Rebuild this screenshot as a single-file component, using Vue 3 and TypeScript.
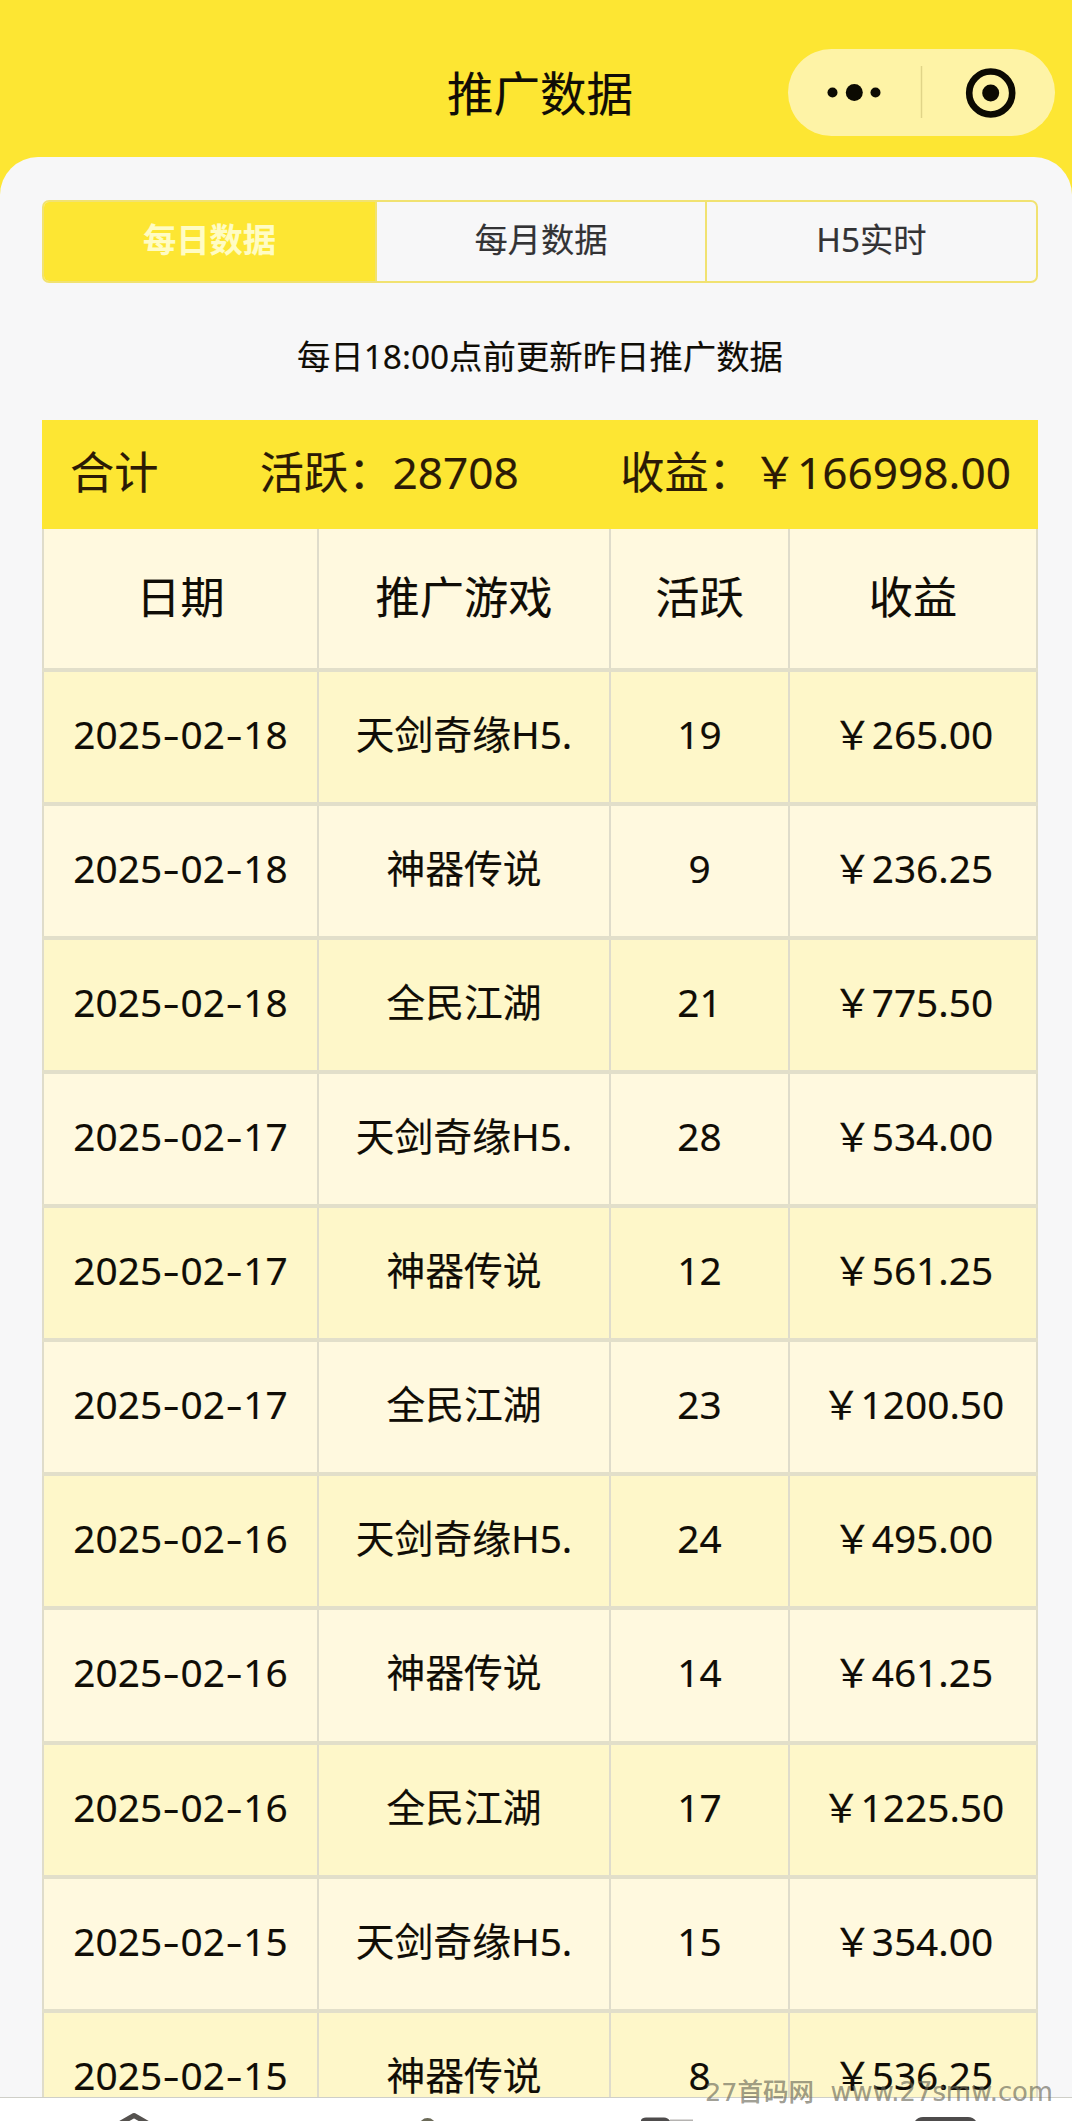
<script setup lang="ts">
interface Row {
  date: string
  game: string
  active: number
  income: string
}

const tabs: string[] = ['每日数据', '每月数据', 'H5实时']
const activeTab = 0
const columns: string[] = ['日期', '推广游戏', '活跃', '收益']

const rows: Row[] = [
  { date: '2025-02-18', game: '天剑奇缘H5.', active: 19, income: '265.00' },
  { date: '2025-02-18', game: '神器传说', active: 9, income: '236.25' },
  { date: '2025-02-18', game: '全民江湖', active: 21, income: '775.50' },
  { date: '2025-02-17', game: '天剑奇缘H5.', active: 28, income: '534.00' },
  { date: '2025-02-17', game: '神器传说', active: 12, income: '561.25' },
  { date: '2025-02-17', game: '全民江湖', active: 23, income: '1200.50' },
  { date: '2025-02-16', game: '天剑奇缘H5.', active: 24, income: '495.00' },
  { date: '2025-02-16', game: '神器传说', active: 14, income: '461.25' },
  { date: '2025-02-16', game: '全民江湖', active: 17, income: '1225.50' },
  { date: '2025-02-15', game: '天剑奇缘H5.', active: 15, income: '354.00' },
  { date: '2025-02-15', game: '神器传说', active: 8, income: '536.25' },
]

const dateParts = (date: string): string[] => date.split(/(-)/)
</script>

<template>
  <div class="page">
    <header class="nav">
      <h1 class="title">推广数据</h1>
      <div class="capsule">
        <svg width="267" height="87" viewBox="0 0 267 87">
          <g fill="#0c0a02">
            <circle cx="44.500" cy="43.500" r="5" />
            <circle cx="66.300" cy="43.500" r="8.500" />
            <circle cx="87.500" cy="43.500" r="5" />
            <circle cx="202.700" cy="44" r="8.500" />
          </g>
          <path d="M133.500 17V69" stroke="#e0d488" stroke-width="1.500" />
          <circle cx="202.700" cy="44" r="21.500" fill="none" stroke="#0c0a02" stroke-width="6.600" />
        </svg>
      </div>
    </header>

    <main class="sheet">
      <nav class="tabs">
        <div v-for="(tab, i) in tabs" :key="tab" class="tab" :class="{ on: i === activeTab }">{{ tab }}</div>
      </nav>
      <p class="notice">每日18:00点前更新昨日推广数据</p>

      <section class="table">
        <div class="total">
          <span>合计</span>
          <span>活跃：28708</span>
          <span>收益：￥166998.00</span>
        </div>
        <div class="row head">
          <div v-for="c in columns" :key="c" class="cell">{{ c }}</div>
        </div>
        <div v-for="(r, i) in rows" :key="i" class="row" :class="{ deep: i % 2 === 0 }">
          <div class="cell">
            <span v-for="(p, k) in dateParts(r.date)" :key="k" :class="{ dash: p === '-' }">{{ p }}</span>
          </div>
          <div class="cell">{{ r.game }}</div>
          <div class="cell">{{ r.active }}</div>
          <div class="cell">￥{{ r.income }}</div>
        </div>
      </section>
    </main>

    <footer class="tabbar">
      <svg width="1072" height="23" viewBox="0 0 1072 23">
        <path d="M112 30L134 17.500L156 30" fill="none" stroke="#55524f" stroke-width="5" stroke-linejoin="round" />
        <circle cx="427.500" cy="28.500" r="8.500" fill="#6b6a58" />
        <path d="M641 23V22Q642 19.500 646 19.500H664Q668 19.500 670 23Z" fill="#4e4c4c" />
        <path d="M670 21.500H693V23H670Z" fill="#b5b3b1" />
        <path d="M915 23Q918 19 923 19H968Q973 19 976 23Z" fill="#4e4c4c" />
      </svg>
    </footer>
    <div class="watermark"><span class="site">27首码网</span><span class="url">www.27smw.com</span></div>
  </div>
</template>

<style>
body {
  margin: 0;
  overflow: hidden;
}
</style>

<style scoped>
.page {
  position: relative;
  display: flex;
  flex-direction: column;
  width: 1072px;
  height: 2121px;
  overflow: hidden;
  background: #fde633;
  color: #100d06;
  font-family: "Noto Sans", "Noto Sans CJK SC", sans-serif;
  -webkit-text-stroke: 0.15px currentColor;
}
.nav {
  position: relative;
  flex: none;
  display: flex;
  justify-content: center;
  height: 157px;
}
.title {
  margin: 59px 0 0 8px;
  font-size: 46.500px;
  font-weight: 400;
  line-height: 68px;
  height: 68px;
}
.capsule {
  position: absolute;
  left: 788px;
  top: 49px;
  width: 267px;
  height: 87px;
  border-radius: 44px;
  background: #fef3a6;
}
.sheet {
  flex: 1;
  min-height: 0;
  overflow: hidden;
  padding: 43px 34px 0 42px;
  border-radius: 38px 38px 0 0;
  background: #f7f7f8;
}
.tabs {
  display: grid;
  grid-template-columns: 331px 330px 1fr;
  box-sizing: border-box;
  height: 83px;
  border: 2px solid #f1e271;
  border-radius: 7px;
  overflow: hidden;
}
.tab {
  box-sizing: border-box;
  text-align: center;
  font-size: 33.300px;
  line-height: 74px;
  color: #333335;
}
.tab + .tab {
  border-left: 2px solid #f1e271;
}
.tab.on {
  background: #fde633;
  color: #fffcc4;
  font-weight: 700;
}
.notice {
  margin: 48px 0 0;
  height: 50px;
  line-height: 50px;
  text-align: center;
  font-size: 33.400px;
}
.table {
  margin-top: 39px;
}
.total {
  display: flex;
  justify-content: space-between;
  box-sizing: border-box;
  height: 109px;
  padding: 0 27px 0 28px;
  background: #fde633;
  color: #2b1a05;
  font-size: 44.200px;
  line-height: 104px;
}
.row {
  display: grid;
  grid-template-columns: 275px 292px 179px 250px;
  box-sizing: border-box;
  height: 134.150px;
  border-bottom: 4px solid #e2dfca;
  background: #fff9df;
  font-size: 38.800px;
  line-height: 124px;
}
.row.deep {
  background: #fef7c9;
}
.row.head {
  height: 142.500px;
  font-size: 44.200px;
  line-height: 136px;
}
.cell {
  box-sizing: border-box;
  height: 100%;
  border-left: 2px solid #dfdccb;
  text-align: center;
  white-space: nowrap;
}
.cell:last-child {
  border-right: 2px solid #dfdccb;
}
.dash {
  display: inline-block;
  width: 18.400px;
  transform: scaleX(1.350);
}
.tabbar {
  flex: none;
  box-sizing: border-box;
  height: 24px;
  border-top: 1px solid #cfcfc8;
  background: #fff;
}
.tabbar svg,
.capsule svg {
  display: block;
}
.watermark {
  position: absolute;
  left: 705px;
  top: 2074px;
  display: flex;
  justify-content: space-between;
  width: 348px;
  line-height: 36px;
  font-family: "DejaVu Sans", "Noto Sans CJK SC", sans-serif;
  color: rgba(105, 103, 88, 0.65);
  white-space: nowrap;
}
.site {
  font-size: 25.500px;
  font-weight: 500;
}
.url {
  font-size: 25.800px;
}
</style>
